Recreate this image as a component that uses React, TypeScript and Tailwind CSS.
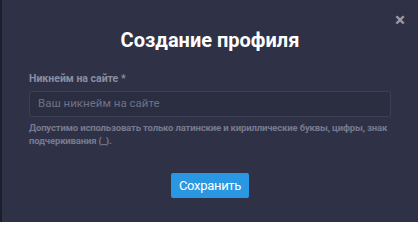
export default function App() {
  return (
    <div className="w-[418px] h-[222px] bg-[#1c1e2b] font-['Roboto',sans-serif] overflow-hidden">
      <div className="relative ml-[2px] h-full bg-[#2f3246] px-[27px] pt-[26px]">
        <button className="absolute right-[13px] top-[10px] text-[#9a9cab] text-[19px] font-bold leading-none">×</button>
        <h2 className="text-center text-white text-[20px] font-bold leading-[28px]">Создание профиля</h2>
        <div className="mt-[18px] text-[10.5px] font-bold text-[#8b8ea1] leading-[14px]">Никнейм на сайте *</div>
        <div className="mt-[5px] h-[26px] rounded-[2px] border border-[#3d4055] bg-[#2b2e41] flex items-center px-[8px] text-[11.5px] text-[#6e7186]">
          Ваш никнейм на сайте
        </div>
        <p className="mt-[4px] text-[9.5px] font-bold leading-[13px] tracking-[-0.15px] text-[#777a8e]">
          Допустимо использовать только латинские и кириллические буквы, цифры, знак подчеркивания (_).
        </p>
        <div className="mt-[26px] flex justify-center">
          <button className="h-[25px] px-[8px] rounded-[2px] bg-[#2a97e2] text-white text-[13px] tracking-[-0.3px]">Сохранить</button>
        </div>
      </div>
    </div>
  );
}
